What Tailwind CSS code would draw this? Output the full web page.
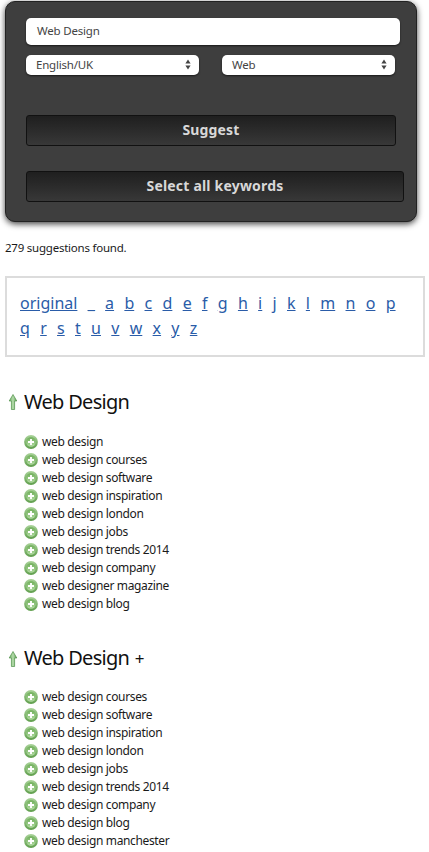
<!DOCTYPE html>
<html>
<head>
<meta charset="utf-8">
<script src="https://cdn.jsdelivr.net/npm/@tailwindcss/browser@4"></script>
</head>
<body class="bg-white overflow-hidden font-['Noto_Sans',sans-serif] text-[#1a1a1a]">
<svg width="0" height="0" class="absolute">
  <defs>
    <linearGradient id="ring" x1="0" y1="0" x2="0" y2="1"><stop offset="0" stop-color="#a8d298"/><stop offset="1" stop-color="#5f9e4c"/></linearGradient>
    <linearGradient id="core" x1="0" y1="0" x2="0" y2="1"><stop offset="0" stop-color="#6fae5a"/><stop offset="1" stop-color="#b2dba2"/></linearGradient>
    <linearGradient id="arr" x1="0" y1="0" x2="1" y2="0"><stop offset="0" stop-color="#6aa862"/><stop offset="0.5" stop-color="#b4dcaa"/><stop offset="1" stop-color="#5a9a54"/></linearGradient>
    <symbol id="plus" viewBox="0 0 14 14"><circle cx="7" cy="7" r="6.9" fill="url(#ring)"/><circle cx="7" cy="7" r="4.8" fill="url(#core)"/><path d="M7 4V10M4 7H10" stroke="#fff" stroke-width="1.9"/></symbol>
    <symbol id="up" viewBox="0 0 10 16"><path d="M5 0.5 L8.8 7 H6.6 V15.5 H3.4 V7 H1.2 Z" fill="url(#arr)" stroke="#4f9049" stroke-width="0.7"/></symbol>
  </defs>
</svg>
<div class="w-[429px] h-[852px] overflow-hidden">
  <section class="ml-[5px] mt-px w-[412px] h-[221px] rounded-[10px] border border-[#222] bg-[#3e3e3e] shadow-[0_2px_6px_rgba(0,0,0,0.75)] pt-4 pl-5 relative">
    <div class="w-[374px] h-[27px] rounded-[5px] bg-white text-[11.5px] tracking-[-0.2px] text-[#444] leading-[26px] pl-[11px] shadow-[0_1px_2px_rgba(0,0,0,0.6)]">Web Design</div>
    <div class="flex gap-[23px] mt-[10px]">
      <div class="w-[173px] h-5 rounded-[5px] bg-white text-[11.5px] tracking-[-0.2px] text-[#444] pl-[10px] pr-[8px] pb-px flex justify-between items-center shadow-[0_1px_2px_rgba(0,0,0,0.6)]">English/UK<svg width="6" height="11" viewBox="0 0 6 11" fill="#444"><path d="M3 0.5 L5.6 4.5 H0.4 Z M3 10.5 L5.6 6.5 H0.4 Z"/></svg></div>
      <div class="w-[173px] h-5 rounded-[5px] bg-white text-[11.5px] tracking-[-0.2px] text-[#444] pl-[10px] pr-[8px] pb-px flex justify-between items-center shadow-[0_1px_2px_rgba(0,0,0,0.6)]">Web<svg width="6" height="11" viewBox="0 0 6 11" fill="#444"><path d="M3 0.5 L5.6 4.5 H0.4 Z M3 10.5 L5.6 6.5 H0.4 Z"/></svg></div>
    </div>
    <div class="mt-10 w-[370px] h-[31px] rounded-[3px] border border-[#111] bg-gradient-to-b from-[#1f1f1f] to-[#383838] text-center text-[#d8d8d8] font-bold text-sm tracking-[0.15px] leading-[27px]">Suggest</div>
    <div class="mt-[25px] w-[378px] h-[31px] rounded-[3px] border border-[#111] bg-gradient-to-b from-[#1f1f1f] to-[#383838] text-center text-[#d8d8d8] font-bold text-sm tracking-[0.2px] leading-[27px]">Select all keywords</div>
  </section>
  <p class="ml-[5px] mt-[18px] text-[11.5px] tracking-[-0.23px] leading-4">279 suggestions found.</p>
  <nav class="ml-[5px] mt-5 w-[420px] h-[81px] border-2 border-[#dcdcdc] pt-[13px] pl-[13px] text-[16px] leading-[25px] text-[#2a5ca8]">
    <div class="flex flex-wrap gap-x-[10.3px] w-[382px]">
      <a class="underline">original</a><a class="underline">_</a><a class="underline">a</a><a class="underline">b</a><a class="underline">c</a><a class="underline">d</a><a class="underline">e</a><a class="underline">f</a><a class="underline">g</a><a class="underline">h</a><a class="underline">i</a><a class="underline">j</a><a class="underline">k</a><a class="underline">l</a><a class="underline">m</a><a class="underline">n</a><a class="underline">o</a><a class="underline">p</a><a class="underline">q</a><a class="underline">r</a><a class="underline">s</a><a class="underline">t</a><a class="underline">u</a><a class="underline">v</a><a class="underline">w</a><a class="underline">x</a><a class="underline">y</a><a class="underline">z</a>
    </div>
  </nav>
  <h2 class="ml-2 mt-[31px] flex items-center gap-[6px] text-[20px] tracking-[-0.7px] leading-7 text-[#111]">
    <svg width="10" height="16"><use href="#up"/></svg>
    <span>Web Design</span>
  </h2>
  <ul class="ml-6 mt-[17px] text-[12px] tracking-[-0.35px] leading-[18px]">
    <li class="flex items-center gap-1 h-[18px]"><svg width="14" height="14"><use href="#plus"/></svg>web design</li>
    <li class="flex items-center gap-1 h-[18px]"><svg width="14" height="14"><use href="#plus"/></svg>web design courses</li>
    <li class="flex items-center gap-1 h-[18px]"><svg width="14" height="14"><use href="#plus"/></svg>web design software</li>
    <li class="flex items-center gap-1 h-[18px]"><svg width="14" height="14"><use href="#plus"/></svg>web design inspiration</li>
    <li class="flex items-center gap-1 h-[18px]"><svg width="14" height="14"><use href="#plus"/></svg>web design london</li>
    <li class="flex items-center gap-1 h-[18px]"><svg width="14" height="14"><use href="#plus"/></svg>web design jobs</li>
    <li class="flex items-center gap-1 h-[18px]"><svg width="14" height="14"><use href="#plus"/></svg>web design trends 2014</li>
    <li class="flex items-center gap-1 h-[18px]"><svg width="14" height="14"><use href="#plus"/></svg>web design company</li>
    <li class="flex items-center gap-1 h-[18px]"><svg width="14" height="14"><use href="#plus"/></svg>web designer magazine</li>
    <li class="flex items-center gap-1 h-[18px]"><svg width="14" height="14"><use href="#plus"/></svg>web design blog</li>
  </ul>
  <h2 class="ml-2 mt-[31px] flex items-center gap-[6px] text-[20px] tracking-[-0.7px] leading-7 text-[#111]">
    <svg width="10" height="16"><use href="#up"/></svg>
    <span>Web Design <span class="text-[17px] ml-px">+</span></span>
  </h2>
  <ul class="ml-6 mt-[15px] text-[12px] tracking-[-0.35px] leading-[18px]">
    <li class="flex items-center gap-1 h-[18px]"><svg width="14" height="14"><use href="#plus"/></svg>web design courses</li>
    <li class="flex items-center gap-1 h-[18px]"><svg width="14" height="14"><use href="#plus"/></svg>web design software</li>
    <li class="flex items-center gap-1 h-[18px]"><svg width="14" height="14"><use href="#plus"/></svg>web design inspiration</li>
    <li class="flex items-center gap-1 h-[18px]"><svg width="14" height="14"><use href="#plus"/></svg>web design london</li>
    <li class="flex items-center gap-1 h-[18px]"><svg width="14" height="14"><use href="#plus"/></svg>web design jobs</li>
    <li class="flex items-center gap-1 h-[18px]"><svg width="14" height="14"><use href="#plus"/></svg>web design trends 2014</li>
    <li class="flex items-center gap-1 h-[18px]"><svg width="14" height="14"><use href="#plus"/></svg>web design company</li>
    <li class="flex items-center gap-1 h-[18px]"><svg width="14" height="14"><use href="#plus"/></svg>web design blog</li>
    <li class="flex items-center gap-1 h-[18px]"><svg width="14" height="14"><use href="#plus"/></svg>web design manchester</li>
  </ul>
</div>
</body>
</html>
